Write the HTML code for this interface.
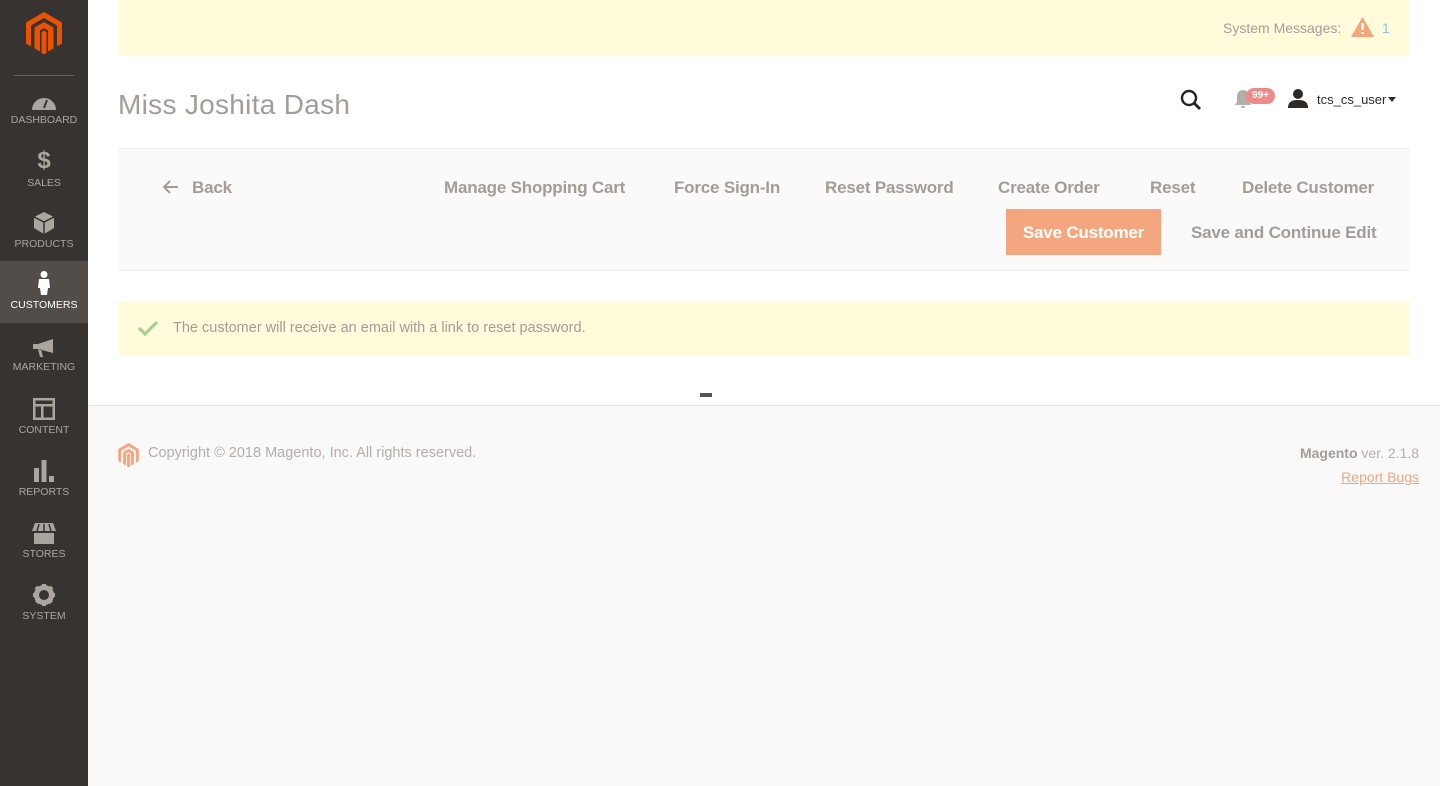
<!DOCTYPE html>
<html><head><meta charset="utf-8"><style>
*{margin:0;padding:0;box-sizing:border-box}
body{width:1440px;height:786px;background:#f9f9f9;font-family:"Liberation Sans",sans-serif;position:relative;overflow:hidden}
.a{position:absolute;white-space:nowrap}
#side{position:absolute;left:0;top:0;width:88px;height:786px;background:#373330}
.nav{position:absolute;left:0;width:88px;text-align:center;color:#aaa69f;font-size:10.5px}
.nav svg{display:block;margin:0 auto 4px}
#main{position:absolute;left:88px;top:0;width:1352px;height:406px;background:#fff;border-bottom:1px solid #e6e6e6}
.btn{position:absolute;font-size:17px;font-weight:bold;color:#a49c96;white-space:nowrap;letter-spacing:-0.2px}
</style></head><body>
<div id="side">
 <svg class="a" style="left:26px;top:12px" width="36" height="42" viewBox="0 0 36 42"><path d="M18 0L36 10.5V31.5L31 34.5V13.5L18 6L5 13.5V34.5L0 31.5V10.5Z M8.5 15.5L18 10L27.5 15.5V36.5L22 39.5V18.5L18 16.2L14 18.5V39.5L8.5 36.5Z M15.5 20V41L18 42.5L20.5 41V20L18 18.5Z" fill="#eb5202" fill-rule="evenodd"/></svg>
 <div class="a" style="left:14px;top:75px;width:60px;height:1px;background:#6b6560"></div>
 <div class="nav" style="top:94px"><svg width="24" height="16" viewBox="0 0 24 16"><path d="M0 16A12 12 0 0 1 24 16Z" fill="#aaa69f"/><path d="M12 14L15 6" stroke="#373330" stroke-width="2"/></svg>DASHBOARD</div>
 <div class="nav" style="top:149px"><div style="font-size:24px;font-weight:bold;line-height:24px;margin-bottom:4px">$</div>SALES</div>
 <div class="nav" style="top:212px"><svg width="20" height="22" viewBox="0 0 20 22"><path d="M10 0L20 5V16L10 22L0 16V5Z" fill="#aaa69f"/><path d="M0 5L10 10L20 5M10 10V22" stroke="#373330" stroke-width="1.5" fill="none"/></svg>PRODUCTS</div>
 <div style="position:absolute;left:0;top:261px;width:88px;height:62px;background:#524d49"></div>
 <div class="nav" style="top:271px;color:#fff"><svg width="14" height="24" viewBox="0 0 14 24"><circle cx="7" cy="3.5" r="3.5" fill="#fff"/><path d="M2 8H12L13 17H11L10 24H4L3 17H1Z" fill="#fff"/></svg>CUSTOMERS</div>
 <div class="nav" style="top:339px"><svg width="22" height="18" viewBox="0 0 22 18"><path d="M0 5H5L20 0V14L5 10H0Z M5 10L7 18H10L8 10Z" fill="#aaa69f"/></svg>MARKETING</div>
 <div class="nav" style="top:398px"><svg width="22" height="22" viewBox="0 0 22 22"><path d="M0 0H22V22H0ZM2.5 2.5V6H19.5V2.5ZM2.5 8.5V19.5H8V8.5ZM10.5 8.5V19.5H19.5V8.5Z" fill="#aaa69f" fill-rule="evenodd"/></svg>CONTENT</div>
 <div class="nav" style="top:460px"><svg width="20" height="22" viewBox="0 0 20 22"><path d="M0 8H5V22H0ZM7.5 0H12.5V22H7.5ZM15 16H20V22H15Z" fill="#aaa69f"/></svg>REPORTS</div>
 <div class="nav" style="top:523px"><svg width="24" height="21" viewBox="0 0 24 21"><path d="M3 0H21L24 8H0Z M2 10H22V21H2Z" fill="#aaa69f"/><path d="M7 1L5 8M12 1V8M17 1L19 8" stroke="#373330" stroke-width="1.5"/></svg>STORES</div>
 <div class="nav" style="top:584px"><svg width="22" height="22" viewBox="0 0 22 22"><circle cx="11" cy="11" r="7.5" fill="none" stroke="#aaa69f" stroke-width="5"/><path d="M11 0V22M0 11H22M3 3L19 19M19 3L3 19" stroke="#aaa69f" stroke-width="4" stroke-dasharray="4 14"/></svg>SYSTEM</div>
</div>
<div id="main"></div>
<div class="a" style="left:118px;top:0;width:1292px;height:56px;background:#fffbdb"></div>
<div class="a" style="left:1223px;top:20px;font-size:14px;color:#a39e99">System Messages:</div>
<svg class="a" style="left:1351px;top:17px" width="23" height="20" viewBox="0 0 23 20"><path d="M11.5 0L23 20H0Z" fill="#f3a57c"/><path d="M11.5 6V13M11.5 15V17" stroke="#fff" stroke-width="2.4"/></svg>
<div class="a" style="left:1382px;top:20px;font-size:14px;color:#87c6e8">1</div>
<div class="a" style="left:118px;top:89px;font-size:28px;color:#a39c97;letter-spacing:0.3px">Miss Joshita Dash</div>
<svg class="a" style="left:1179px;top:88px" width="24" height="24" viewBox="0 0 24 24"><circle cx="10" cy="10" r="7" fill="none" stroke="#222" stroke-width="2.4"/><path d="M15 15L21 21" stroke="#222" stroke-width="2.8"/></svg>
<svg class="a" style="left:1234px;top:89px" width="18" height="20" viewBox="0 0 18 20"><path d="M9 1C4 1 3 5 3 9V13L1 16H17L15 13V9C15 5 14 1 9 1ZM7 17H11A2 2 0 0 1 7 17Z" fill="#b3aeaa"/></svg>
<div class="a" style="left:1246px;top:88px;width:29px;height:16px;border-radius:8px;background:#ec8b87;color:#fff;font-size:10px;font-weight:bold;text-align:center;line-height:16px">99+</div>
<svg class="a" style="left:1288px;top:88px" width="20" height="20" viewBox="0 0 20 20"><circle cx="10" cy="6" r="5" fill="#2f2a27"/><path d="M0 20C0 13 5 12 10 12S20 13 20 20Z" fill="#2f2a27"/></svg>
<div class="a" style="left:1317px;top:92px;font-size:13px;color:#2f2a27">tcs_cs_user</div>
<div class="a" style="left:1388px;top:97px;border:4px solid transparent;border-top:5px solid #2f2a27;border-bottom:0"></div>
<div class="a" style="left:118px;top:148px;width:1292px;height:123px;background:#fafafa;border-top:1px solid #ececec;border-bottom:1px solid #ececec"></div>
<svg class="a" style="left:163px;top:180px" width="16" height="14" viewBox="0 0 16 14"><path d="M15 7H2M7 1L1 7L7 13" fill="none" stroke="#a49c96" stroke-width="2"/></svg>
<div class="btn" style="left:192px;top:178px">Back</div>
<div class="btn" style="left:444px;top:178px">Manage Shopping Cart</div>
<div class="btn" style="left:674px;top:178px">Force Sign-In</div>
<div class="btn" style="left:825px;top:178px">Reset Password</div>
<div class="btn" style="left:998px;top:178px">Create Order</div>
<div class="btn" style="left:1150px;top:178px">Reset</div>
<div class="btn" style="left:1242px;top:178px">Delete Customer</div>
<div class="a" style="left:1006px;top:209px;width:155px;height:46px;background:#f4a77f"></div>
<div class="btn" style="left:1006px;top:223px;width:155px;text-align:center;color:#fff">Save Customer</div>
<div class="btn" style="left:1191px;top:223px">Save and Continue Edit</div>
<div class="a" style="left:118px;top:301px;width:1292px;height:54px;background:#fffbdb"></div>
<svg class="a" style="left:138px;top:320px" width="20" height="16" viewBox="0 0 20 16"><path d="M1 8L7 14L19 2" fill="none" stroke="#a8cf8e" stroke-width="3.2"/></svg>
<div class="a" style="left:173px;top:320px;font-size:14.5px;color:#a39c97">The customer will receive an email with a link to reset password.</div>
<div class="a" style="left:700px;top:393px;width:12px;height:4px;background:#555"></div>
<svg class="a" style="left:118px;top:443px" width="21" height="24" viewBox="0 0 36 42"><path d="M18 0L36 10.5V31.5L31 34.5V13.5L18 6L5 13.5V34.5L0 31.5V10.5Z M8.5 15.5L18 10L27.5 15.5V36.5L22 39.5V18.5L18 16.2L14 18.5V39.5L8.5 36.5Z M15.5 20V41L18 42.5L20.5 41V20L18 18.5Z" fill="#f5a67e" fill-rule="evenodd"/></svg>
<div class="a" style="left:148px;top:445px;font-size:14.5px;color:#b3aeaa">Copyright © 2018 Magento, Inc. All rights reserved.</div>
<div class="a" style="right:21px;top:445px;font-size:14px;color:#b3aeaa"><b style="color:#a39c97">Magento</b> ver. 2.1.8</div>
<div class="a" style="right:21px;top:469px;font-size:14px;color:#f3a57c;text-decoration:underline">Report Bugs</div>
</body></html>
